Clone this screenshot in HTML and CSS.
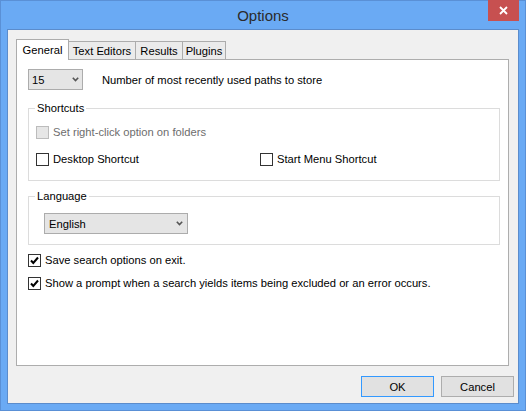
FILE: index.html
```html
<!DOCTYPE html>
<html>
<head>
<meta charset="utf-8">
<title>Options</title>
<link rel="stylesheet" href="styles.css">
</head>
<body>
<div class="window">
  <div class="titlebar">
    <span class="title">Options</span>
    <div class="close">
      <svg width="9" height="9" viewBox="0 0 9 9"><path d="M1 1 L8 8 M8 1 L1 8" stroke="#fff" stroke-width="1.8" fill="none"/></svg>
    </div>
  </div>
  <div class="client">
    <div class="tabs">
      <div class="tab tab-general active">General</div>
      <div class="tab tab-editors">Text Editors</div>
      <div class="tab tab-results">Results</div>
      <div class="tab tab-plugins">Plugins</div>
    </div>
    <div class="panel">
      <div class="mru-row">
        <div class="combo combo-mru">
          <span>15</span>
          <svg class="chev" width="7" height="5" viewBox="0 0 7 5"><path d="M0.8 0.8 L3.5 3.6 L6.2 0.8" stroke="#555" stroke-width="1.6" fill="none"/></svg>
        </div>
        <span class="mru-label">Number of most recently used paths to store</span>
      </div>

      <div class="group group-shortcuts">
        <span class="group-title">Shortcuts</span>
        <div class="check disabled"><span class="box"></span><span>Set right-click option on folders</span></div>
        <div class="check-grid">
          <div class="check"><span class="box"></span><span>Desktop Shortcut</span></div>
          <div class="check"><span class="box"></span><span>Start Menu Shortcut</span></div>
        </div>
      </div>

      <div class="group group-lang">
        <span class="group-title">Language</span>
        <div class="combo combo-lang">
          <span>English</span>
          <svg class="chev" width="7" height="5" viewBox="0 0 7 5"><path d="M0.8 0.8 L3.5 3.6 L6.2 0.8" stroke="#555" stroke-width="1.6" fill="none"/></svg>
        </div>
      </div>

      <div class="check check-save"><span class="box checked"><svg width="11" height="11" viewBox="0 0 11 11"><path d="M2 5.5 L4.3 8 L9 2.5" stroke="#000" stroke-width="2" fill="none"/></svg></span><span>Save search options on exit.</span></div>
      <div class="check check-prompt"><span class="box checked"><svg width="11" height="11" viewBox="0 0 11 11"><path d="M2 5.5 L4.3 8 L9 2.5" stroke="#000" stroke-width="2" fill="none"/></svg></span><span>Show a prompt when a search yields items being excluded or an error occurs.</span></div>
    </div>
    <div class="buttons">
      <div class="btn btn-default">OK</div>
      <div class="btn">Cancel</div>
    </div>
  </div>
</div>
</body>
</html>
```

FILE: styles.css
```css
* { box-sizing: border-box; }
html, body { margin: 0; padding: 0; }
body {
  font-family: "Liberation Sans", Arial, sans-serif;
  font-size: 11.2px;
  color: #000;
}
.window {
  position: relative;
  width: 526px;
  height: 411px;
  background: #6aaaf4;
  border: 1px solid #5a90d6;
  padding: 0 6px 6px 6px;
  display: flex;
  flex-direction: column;
}
.titlebar {
  height: 28px;
  display: flex;
  align-items: center;
  justify-content: center;
}
.title {
  font-size: 15px;
  color: #2b2b2b;
  line-height: 18px;
  padding-top: 1px;
}
.close {
  position: absolute;
  top: -1px;
  right: 6px;
  width: 31px;
  height: 21px;
  background: #c75050;
  display: flex;
  align-items: center;
  justify-content: center;
}
.client {
  flex: 1;
  background: #f0f0f0;
  border: 1px solid #5b8ccc;
  padding: 9px 4px 6px 8px;
  display: flex;
  flex-direction: column;
}
.tabs {
  height: 20px;
  display: flex;
  align-items: flex-end;
}
.tab {
  height: 18px;
  border: 1px solid #acacac;
  border-bottom: none;
  background: #ebebeb;
  margin-left: -1px;
  display: flex;
  align-items: center;
  justify-content: center;
  line-height: 14px;
  padding-top: 1px;
}
.tab.active {
  height: 21px;
  margin-bottom: -1px;
  background: #fff;
  position: relative;
  z-index: 1;
  margin-left: 0;
  padding-top: 0;
  padding-bottom: 1px;
}
.tab-general { width: 53px; }
.tab-editors { width: 67px; margin-left: 0; border-left: none; }
.tab-results { width: 48px; }
.tab-plugins { width: 44px; }
.panel {
  height: 307px;
  margin-right: 5px;
  background: #fff;
  border: 1px solid #adadad;
  padding: 9px 8px 0 11px;
  display: flex;
  flex-direction: column;
}
.mru-row {
  display: flex;
  align-items: center;
  height: 21px;
}
.combo {
  height: 21px;
  background: #e5e5e5;
  border: 1px solid #acacac;
  display: flex;
  align-items: center;
  justify-content: space-between;
  line-height: 14px;
}
.combo-mru {
  width: 55px;
  padding: 0 3px 0 3px;
}
.combo-lang {
  width: 144px;
  padding: 0 4px 0 4px;
}
.mru-label {
  margin-left: 19px;
}
.group {
  position: relative;
  border: 1px solid #dcdcdc;
}
.group-title {
  position: absolute;
  top: -8px;
  left: 6px;
  background: #fff;
  padding: 0 2px;
  line-height: 14px;
}
.group-shortcuts {
  margin-top: 18px;
  height: 73px;
  padding: 17px 0 0 7px;
  display: flex;
  flex-direction: column;
  gap: 14px;
}
.check-grid {
  display: grid;
  grid-template-columns: 224px auto;
}
.group-lang {
  margin-top: 15px;
  height: 49px;
  padding: 16px 0 0 15px;
}
.check {
  display: flex;
  align-items: center;
  height: 13px;
  line-height: 13px;
}
.box {
  width: 13px;
  height: 13px;
  border: 1px solid #333;
  background: #fff;
  margin-right: 4px;
  display: flex;
  align-items: center;
  justify-content: center;
  flex: none;
}
.check.disabled { color: #6d6d6d; }
.check.disabled .box {
  border-color: #bcbcbc;
  background: #e6e6e6;
}
.check-save { margin-top: 9px; }
.check-prompt { margin-top: 10px; }
.buttons {
  margin-top: 10px;
  display: flex;
  justify-content: flex-end;
  gap: 7px;
}
.btn {
  width: 73px;
  height: 21px;
  background: #e1e1e1;
  border: 1px solid #adadad;
  display: flex;
  align-items: center;
  justify-content: center;
  line-height: 14px;
}
.btn-default {
  border-color: #3399ff;
}
```
